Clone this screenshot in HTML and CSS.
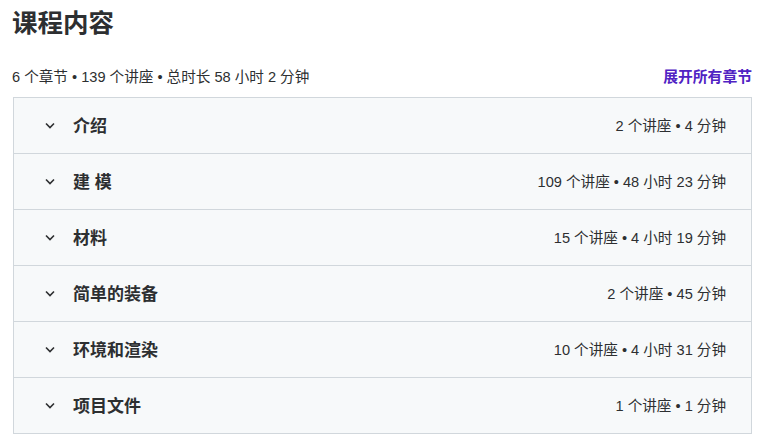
FILE: index.html
```html
<!DOCTYPE html>
<html lang="zh-CN">
<head>
  <meta charset="UTF-8" />
  <meta name="viewport" content="width=device-width, initial-scale=1.0" />
  <title>课程内容</title>
  <link rel="stylesheet" href="styles.css">
</head>
<body>
  <div class="container">
    <h2>课程内容</h2>

    <div class="summary">
      <span>6 个章节 • 139 个讲座 • 总时长 58 小时 2 分钟</span>
      <a href="#" class="expand">展开所有章节</a>
    </div>

    <div class="sections">
      <div class="section">
        <span class="chevron">
          <svg width="12" height="12" viewBox="0 0 12 12"><path d="M2 4.5 L6 8.5 L10 4.5" fill="none" stroke="#2d2f31" stroke-width="1.6"/></svg>
        </span>
        <span class="title">介绍</span>
        <span class="meta">2 个讲座 • 4 分钟</span>
      </div>
      <div class="section">
        <span class="chevron">
          <svg width="12" height="12" viewBox="0 0 12 12"><path d="M2 4.5 L6 8.5 L10 4.5" fill="none" stroke="#2d2f31" stroke-width="1.6"/></svg>
        </span>
        <span class="title">建 模</span>
        <span class="meta">109 个讲座 • 48 小时 23 分钟</span>
      </div>
      <div class="section">
        <span class="chevron">
          <svg width="12" height="12" viewBox="0 0 12 12"><path d="M2 4.5 L6 8.5 L10 4.5" fill="none" stroke="#2d2f31" stroke-width="1.6"/></svg>
        </span>
        <span class="title">材料</span>
        <span class="meta">15 个讲座 • 4 小时 19 分钟</span>
      </div>
      <div class="section">
        <span class="chevron">
          <svg width="12" height="12" viewBox="0 0 12 12"><path d="M2 4.5 L6 8.5 L10 4.5" fill="none" stroke="#2d2f31" stroke-width="1.6"/></svg>
        </span>
        <span class="title">简单的装备</span>
        <span class="meta">2 个讲座 • 45 分钟</span>
      </div>
      <div class="section">
        <span class="chevron">
          <svg width="12" height="12" viewBox="0 0 12 12"><path d="M2 4.5 L6 8.5 L10 4.5" fill="none" stroke="#2d2f31" stroke-width="1.6"/></svg>
        </span>
        <span class="title">环境和渲染</span>
        <span class="meta">10 个讲座 • 4 小时 31 分钟</span>
      </div>
      <div class="section">
        <span class="chevron">
          <svg width="12" height="12" viewBox="0 0 12 12"><path d="M2 4.5 L6 8.5 L10 4.5" fill="none" stroke="#2d2f31" stroke-width="1.6"/></svg>
        </span>
        <span class="title">项目文件</span>
        <span class="meta">1 个讲座 • 1 分钟</span>
      </div>
    </div>
  </div>
</body>
</html>
```

FILE: styles.css
```css
body {
    margin: 0;
    font-family: "Liberation Sans", "Noto Sans CJK SC", sans-serif;
    color: #2d2f31;
    background: #fff;
}
.container {
    padding: 8px 16px 0 12px;
}
h2 {
    margin: 0;
    font-size: 25.5px;
    line-height: 30px;
    font-weight: 700;
}
.summary {
    display: flex;
    justify-content: space-between;
    align-items: center;
    margin-top: 15px;
    height: 44px;
    font-size: 14.6px;
}
.expand {
    color: #5022c3;
    font-size: 14.8px;
    font-weight: 700;
    text-decoration: none;
}
.sections {
    margin-left: 1px;
    border: 1px solid #d1d7dc;
    border-bottom: none;
}
.section {
    display: flex;
    align-items: center;
    height: 55px;
    padding: 0 25px 0 30px;
    background: #f7f9fa;
    border-bottom: 1px solid #d1d7dc;
}
.chevron {
    display: flex;
    width: 12px;
    margin-right: 17px;
    margin-top: -2px;
}
.title {
    flex: 1;
    font-size: 17px;
    font-weight: 700;
    margin-top: -2px;
}
.meta {
    font-size: 14.6px;
    margin-top: -2px;
}
```
